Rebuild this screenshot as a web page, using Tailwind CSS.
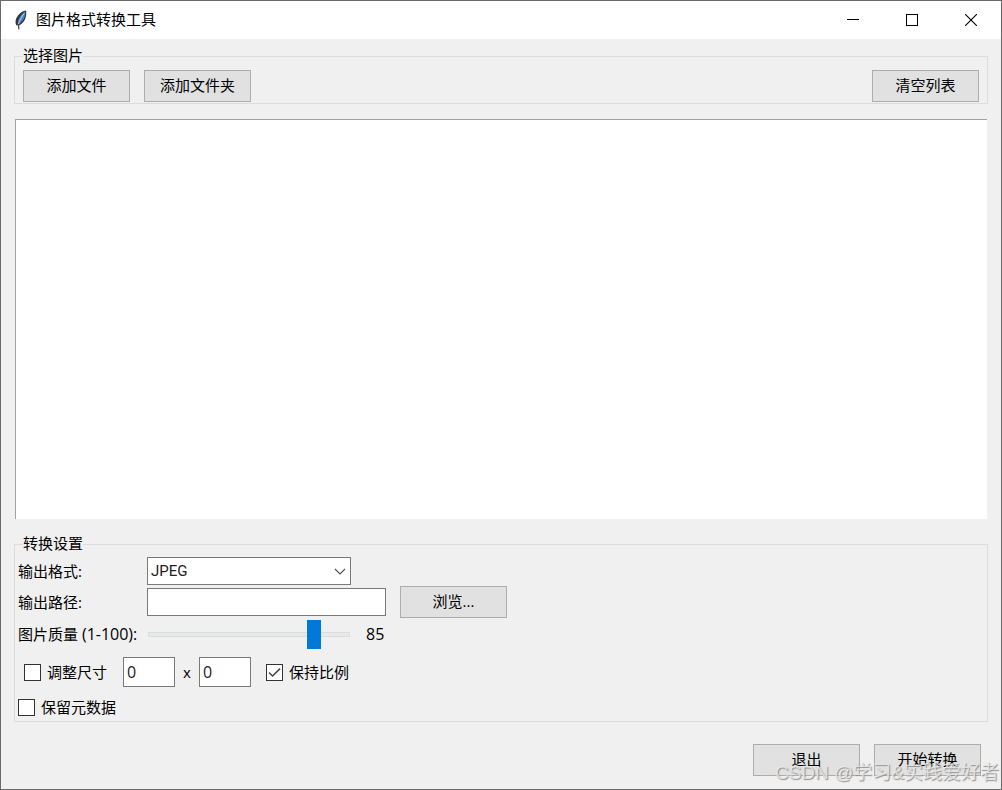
<!DOCTYPE html>
<html lang="zh-CN">
<head>
  <meta charset="UTF-8" />
  <meta name="viewport" content="width=device-width, initial-scale=1.0" />
  <title>图片格式转换工具</title>
  <script src="https://cdn.jsdelivr.net/npm/@tailwindcss/browser@4"></script>
</head>
<body class="bg-[#f0f0f0] text-black text-[15px] leading-4 font-['Open_Sans','Noto_Sans_CJK_SC',sans-serif]">
  <div class="relative min-h-screen flex flex-col border border-[#6a6a6a] overflow-hidden">
    <!-- Title bar -->
    <header class="h-[38px] bg-white flex items-center justify-between">
      <div class="flex items-center pl-3">
        <svg class="w-4 h-5 mr-[7px]" viewBox="0 0 16 20" aria-hidden="true">
          <path d="M13 0.4 C9.5 0.8 5 4 3.2 8.5 C2.3 11 2.4 13.5 3.2 15.2 L6.2 15.6 C9.8 13.4 12 10.4 12.8 7 C13.3 4.5 13.5 2.5 13 0.4 Z" fill="#33373d" />
          <path d="M12.2 1.6 C9.8 3 7 6 5.6 9.5 C4.9 11.5 4.7 13 5 14.6 C8.6 12.2 10.8 9.8 11.7 6.6 C12.2 4.6 12.4 3.2 12.2 1.6 Z" fill="#4c86c8" />
          <path d="M11.2 3.6 C8.6 6.5 6.4 10.5 5.2 15" fill="none" stroke="#a9cdf0" stroke-width="1" />
          <path d="M5.2 14 L6 19.4" fill="none" stroke="#4a4a4a" stroke-width="1.3" />
        </svg>
        <h1 class="pb-[2px]">图片格式转换工具</h1>
      </div>
      <div class="flex h-full pr-px">
        <button type="button" aria-label="最小化" class="w-[59px] flex items-center justify-center hover:bg-[#e5e5e5]">
          <svg class="w-3 h-3" viewBox="0 0 12 12" shape-rendering="crispEdges"><path d="M0 5.5H12" stroke="#000" /></svg>
        </button>
        <button type="button" aria-label="最大化" class="w-[59px] flex items-center justify-center hover:bg-[#e5e5e5]">
          <svg class="w-3 h-3" viewBox="0 0 12 12" shape-rendering="crispEdges"><rect x="0.5" y="0.5" width="11" height="11" fill="none" stroke="#000" /></svg>
        </button>
        <button type="button" aria-label="关闭" class="w-[59px] flex items-center justify-center hover:bg-[#e81123]">
          <svg class="w-3 h-3" viewBox="0 0 12 12"><path d="M0 0L12 12M12 0L0 12" stroke="#000" stroke-width="1.1" /></svg>
        </button>
      </div>
    </header>

    <main class="flex-1 flex flex-col px-[13px] pt-[9px] pb-[13px]">
      <!-- File selection -->
      <fieldset class="border border-[#dcdcdc] px-2 pt-[6px] pb-px">
        <legend class="leading-[14px] pb-[2px]">选择图片</legend>
        <div class="flex justify-between">
          <div class="flex gap-[14px]">
            <button type="button" class="w-[107px] h-8 pb-[2px] border border-[#adadad] bg-[#e1e1e1] hover:border-[#0078d7] hover:bg-[#e5f1fb]">添加文件</button>
            <button type="button" class="w-[107px] h-8 pb-[2px] border border-[#adadad] bg-[#e1e1e1] hover:border-[#0078d7] hover:bg-[#e5f1fb]">添加文件夹</button>
          </div>
          <button type="button" class="w-[107px] h-8 pb-[2px] border border-[#adadad] bg-[#e1e1e1] hover:border-[#0078d7] hover:bg-[#e5f1fb]">清空列表</button>
        </div>
      </fieldset>

      <!-- File list -->
      <ul aria-label="文件列表" class="flex-1 mt-[15px] mb-[17px] mx-px bg-white border-t border-l border-[#a0a0a0] overflow-y-auto"></ul>

      <!-- Conversion settings -->
      <fieldset class="border border-[#dcdcdc] pl-[3px] pr-2 pt-1 pb-px">
        <legend class="ml-[5px] leading-[14px] pb-[2px]">转换设置</legend>
        <div class="flex items-center h-[30px]">
          <label for="format" class="w-[129px]">输出格式:</label>
          <div class="relative w-[204px]">
            <select id="format" class="appearance-none w-full h-7 pl-[3px] pr-6 border border-[#7a7a7a] bg-white text-[#222] font-[Roboto,'Noto_Sans_CJK_SC',sans-serif]">
              <option>JPEG</option>
              <option>PNG</option>
              <option>BMP</option>
              <option>GIF</option>
              <option>TIFF</option>
              <option>WEBP</option>
            </select>
            <svg class="absolute right-[5px] top-[11px] w-3 h-2 pointer-events-none" viewBox="0 0 12 8"><path d="M1 1L6 6L11 1" fill="none" stroke="#555" stroke-width="1.2" /></svg>
          </div>
        </div>
        <div class="flex items-center h-8">
          <label for="path" class="w-[129px]">输出路径:</label>
          <input id="path" type="text" class="w-[239px] h-7 px-[3px] border border-[#7a7a7a] bg-white" />
          <button type="button" class="w-[107px] h-8 ml-[14px] pb-[2px] border border-[#adadad] bg-[#e1e1e1] hover:border-[#0078d7] hover:bg-[#e5f1fb]">浏览...</button>
        </div>
        <div class="flex items-center h-8">
          <label for="quality" class="w-[130px] whitespace-nowrap">图片质量 <span class="text-base leading-4">(1-100):</span></label>
          <input id="quality" type="range" min="1" max="100" value="85" class="appearance-none w-[202px] h-[29px] bg-transparent [&::-webkit-slider-runnable-track]:h-[5px] [&::-webkit-slider-runnable-track]:border [&::-webkit-slider-runnable-track]:border-[#dcdcdc] [&::-webkit-slider-runnable-track]:bg-[#e7eaea] [&::-webkit-slider-thumb]:appearance-none [&::-webkit-slider-thumb]:w-[14px] [&::-webkit-slider-thumb]:h-[29px] [&::-webkit-slider-thumb]:-mt-[13px] [&::-webkit-slider-thumb]:bg-[#0078d7]" />
          <output id="qualityValue" for="quality" class="ml-4 text-base leading-4">85</output>
        </div>
        <div class="flex items-center h-11 pl-[6px]">
          <input id="resize" type="checkbox" class="appearance-none w-[17px] h-[17px] border border-[#333] bg-white checked:bg-[#0078d7]" />
          <label for="resize" class="ml-[6px]">调整尺寸</label>
          <input type="text" value="0" aria-label="宽度" class="w-[52px] h-[30px] ml-4 px-[3px] border border-[#7a7a7a] bg-white text-[#222] text-base" />
          <span class="w-6 text-center">x</span>
          <input type="text" value="0" aria-label="高度" class="w-[52px] h-[30px] px-[3px] border border-[#7a7a7a] bg-white text-[#222] text-base" />
          <span class="relative w-[17px] h-[17px] ml-[15px]">
            <input id="ratio" type="checkbox" checked class="peer block appearance-none w-[17px] h-[17px] border border-[#333] bg-white" />
            <svg class="hidden peer-checked:block absolute inset-0 w-[17px] h-[17px] pointer-events-none" viewBox="0 0 17 17"><path d="M3 8.5L6.6 12L14 4.6" fill="none" stroke="#444" stroke-width="1.5" /></svg>
          </span>
          <label for="ratio" class="ml-[6px]">保持比例</label>
        </div>
        <div class="flex items-center h-[26px]">
          <input id="metadata" type="checkbox" class="appearance-none w-[17px] h-[17px] border border-[#333] bg-white checked:bg-[#0078d7]" />
          <label for="metadata" class="ml-[6px]">保留元数据</label>
        </div>
      </fieldset>

      <!-- Actions -->
      <div class="flex justify-end gap-[14px] mt-[22px] pr-[7px]">
        <button type="button" class="w-[107px] h-8 pb-[2px] border border-[#adadad] bg-[#e1e1e1] hover:border-[#0078d7] hover:bg-[#e5f1fb]">退出</button>
        <button type="button" class="w-[107px] h-8 pb-[2px] border border-[#adadad] bg-[#e1e1e1] hover:border-[#0078d7] hover:bg-[#e5f1fb]">开始转换</button>
      </div>
    </main>

    <!-- Watermark -->
    <div class="absolute right-[2px] bottom-1 text-[19px] leading-6 whitespace-nowrap pointer-events-none text-[#ececec]/80 [text-shadow:1px_1px_1px_#909090] font-['Liberation_Sans','Noto_Sans_CJK_SC',sans-serif]">CSDN @学习&amp;实践爱好者</div>
  </div>

  <script>
    const quality = document.getElementById('quality');
    quality.addEventListener('input', function() {
      document.getElementById('qualityValue').textContent = quality.value;
    });
  </script>
</body>
</html>
